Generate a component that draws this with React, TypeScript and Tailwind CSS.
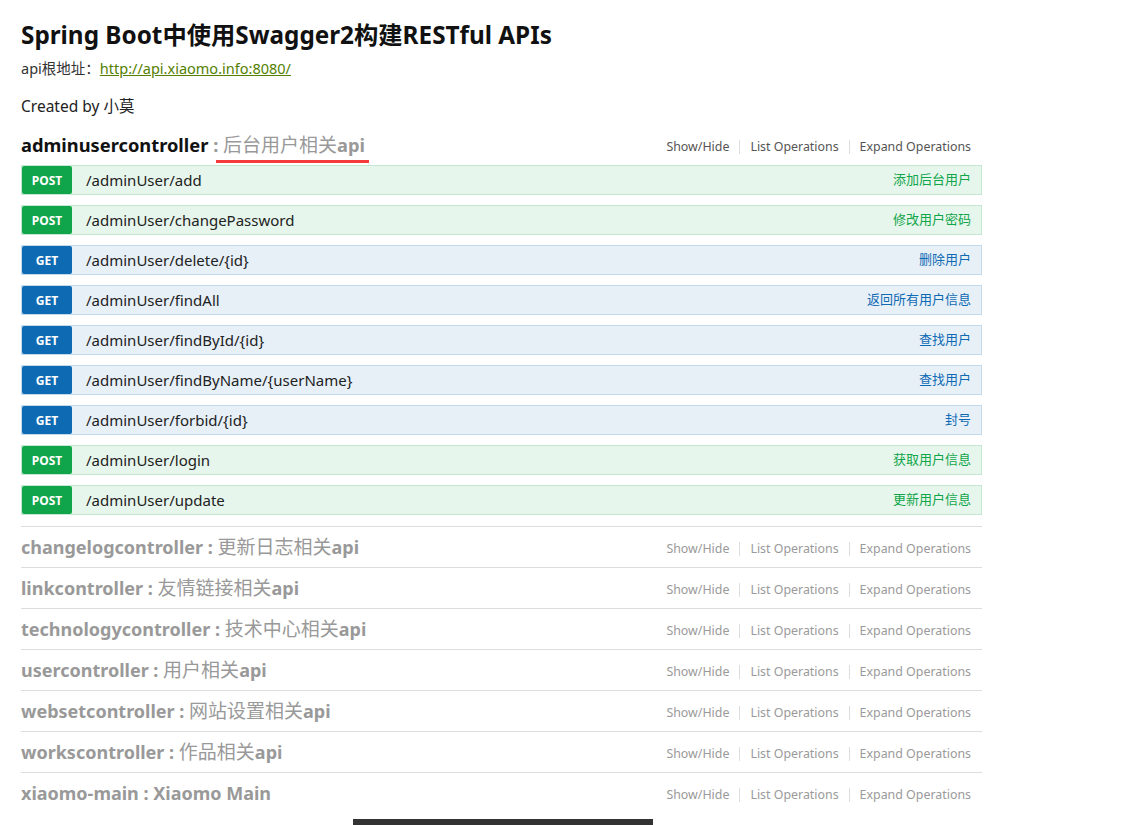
import React from "react";

const font = { fontFamily: '"Noto Sans", "Open Sans", "Noto Sans CJK SC", sans-serif' };

type Op = { m: "POST" | "GET"; path: string; desc: string };

const ops: Op[] = [
  { m: "POST", path: "/adminUser/add", desc: "添加后台用户" },
  { m: "POST", path: "/adminUser/changePassword", desc: "修改用户密码" },
  { m: "GET", path: "/adminUser/delete/{id}", desc: "删除用户" },
  { m: "GET", path: "/adminUser/findAll", desc: "返回所有用户信息" },
  { m: "GET", path: "/adminUser/findById/{id}", desc: "查找用户" },
  { m: "GET", path: "/adminUser/findByName/{userName}", desc: "查找用户" },
  { m: "GET", path: "/adminUser/forbid/{id}", desc: "封号" },
  { m: "POST", path: "/adminUser/login", desc: "获取用户信息" },
  { m: "POST", path: "/adminUser/update", desc: "更新用户信息" },
];

const others: [string, string, boolean][] = [
  ["changelogcontroller", "更新日志相关", true],
  ["linkcontroller", "友情链接相关", true],
  ["technologycontroller", "技术中心相关", true],
  ["usercontroller", "用户相关", true],
  ["websetcontroller", "网站设置相关", true],
  ["workscontroller", "作品相关", true],
  ["xiaomo-main", "Xiaomo Main", false],
];

function Links({ dim }: { dim?: boolean }) {
  const c = dim ? "text-[#9a9a9a]" : "text-[#555]";
  return (
    <div className={`flex items-center text-[12.4px] ${c} pr-[11px] pt-[5px]`}>
      <span className="pr-[10px]">Show/Hide</span>
      <span className="w-px h-[14px] bg-[#ddd]" />
      <span className="px-[10px]">List Operations</span>
      <span className="w-px h-[14px] bg-[#ddd]" />
      <span className="pl-[10px]">Expand Operations</span>
    </div>
  );
}

function OpRow({ op }: { op: Op }) {
  const post = op.m === "POST";
  return (
    <div
      className={`flex items-stretch h-[30px] border ${
        post ? "bg-[#e7f6ec] border-[#c3e8d1]" : "bg-[#e7f0f7] border-[#c3d9ec]"
      }`}
    >
      <div
        className={`w-[50px] flex items-center justify-center text-white text-[12px] font-bold rounded-[2px] pt-[1px] ${
          post ? "bg-[#10a54a]" : "bg-[#0f6ab4]"
        }`}
      >
        {op.m}
      </div>
      <div className="flex-1 flex items-center pl-[14px] text-[15px] text-[#222]">{op.path}</div>
      <div
        className={`flex items-center pr-[10px] text-[13px] ${post ? "text-[#10a54a]" : "text-[#0f6ab4]"}`}
      >
        {op.desc}
      </div>
    </div>
  );
}

export default function App() {
  return (
    <div className="bg-white min-h-[825px] relative" style={font}>
      <div className="pl-[21px] pt-[17px] w-[982px]">
        <h1 className="text-[24.3px] font-bold text-[#111] leading-[36px]">
          Spring Boot中使用Swagger2构建RESTful APIs
        </h1>
        <div className="text-[14.5px] text-[#333] leading-[20px] mt-[5px]">
          api根地址：
          <span className="text-[#547f00] underline">http://api.xiaomo.info:8080/</span>
        </div>
        <div className="text-[15.5px] text-[#222] leading-[20px] mt-[18px]">Created by 小莫</div>

        <div className="flex items-center justify-between h-[28px] mt-[15px]">
          <div className="text-[18.3px] font-bold text-[#111] relative leading-[28px]">
            adminusercontroller
            <span className="text-[#999]">
              {" "}
              : <span className="font-normal text-[19px]">后台用户相关</span>api
            </span>
            <span className="absolute left-[195px] top-[29px] w-[153px] h-[3px] bg-[#f43a3a]" />
          </div>
          <Links />
        </div>

        <div className="flex flex-col gap-[10px] mt-[6px]">
          {ops.map((op, i) => (
            <OpRow key={i} op={op} />
          ))}
        </div>

        <div className="mt-[11px]">
          {others.map(([name, desc, api], i) => (
            <div key={i} className="flex items-center justify-between h-[41px] border-t border-[#ddd]">
              <div className="text-[18px] font-bold text-[#999]">
                {name} : {api ? <span className="font-normal text-[19px]">{desc}</span> : desc}
                {api ? "api" : ""}
              </div>
              <Links dim />
            </div>
          ))}
        </div>
      </div>
      <div className="absolute left-[353px] top-[819px] w-[300px] h-[6px] bg-[#333]" />
    </div>
  );
}
